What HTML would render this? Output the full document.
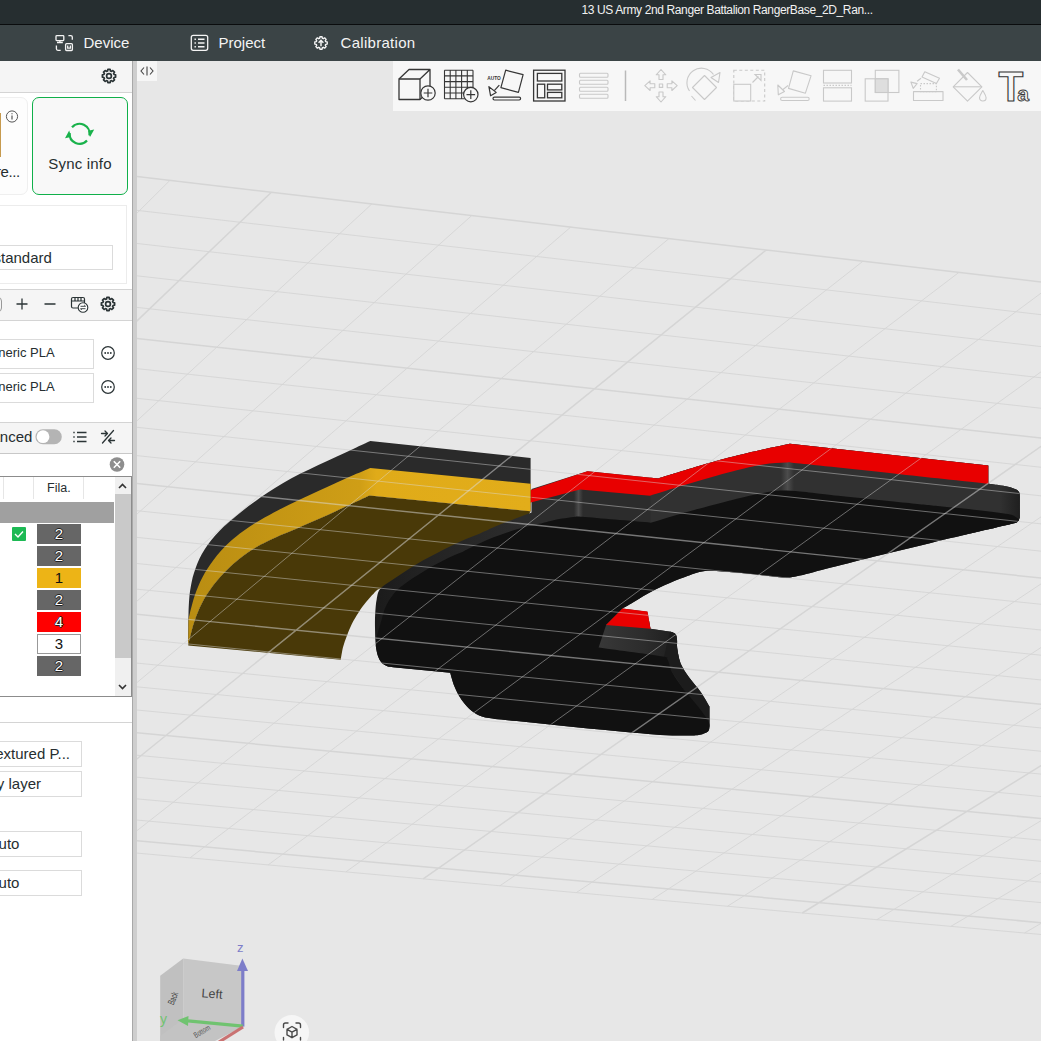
<!DOCTYPE html>
<html><head><meta charset="utf-8"><title>Slicer</title>
<style>
*{box-sizing:border-box}
html,body{margin:0;padding:0}
body{width:1041px;height:1041px;overflow:hidden;position:relative;background:#e7e7e7;font-family:"Liberation Sans",sans-serif;color:#262e30}
.a{position:absolute}
#scene{position:absolute;left:137px;top:61px}
#scene text{font-family:"Liberation Sans",sans-serif}

#title{left:0;top:0;width:1041px;height:25px;background:#262e30;border-bottom:1px solid #0a0c0d;color:#f2f2f2;font-size:12px}
#title span{position:absolute;left:581.5px;top:3px;white-space:nowrap;letter-spacing:-.38px}
#tabs{left:0;top:25px;width:1041px;height:36px;background:#3b4446;color:#f4f4f4;font-size:15px}
#tabs span{position:absolute;top:9px;white-space:nowrap}
#tabs svg{position:absolute}
#panel{left:0;top:61px;width:132px;height:980px;background:#fff;font-size:15px;color:#262e30;overflow:hidden}
#split{left:132px;top:61px;width:5px;height:980px;background:#cecece;border-left:1px solid #a8a8a8}
#collapse{left:137px;top:61px;width:20px;height:20px;background:#f6f6f6}
#toolbar{left:393px;top:61px;width:648px;height:49.700px;background:#f7f7f7}
#toolbar svg{position:absolute;top:0;left:0}
.hdr{left:0;width:132px;background:#f5f5f5}
.ln{left:0;width:132px;height:1px;background:#d4d4d4}
.inp{border:1px solid #dbdbdb;background:#fff;border-left:0;white-space:nowrap;overflow:hidden;line-height:1}
.chip{left:37px;width:44px;height:19.500px;text-align:center;font-size:15px;line-height:19px;color:#fff;background:#666;
 text-shadow:-1px 0 #222,1px 0 #222,0 -1px #222,0 1px #222}

</style></head><body>
<svg id="scene" width="904" height="980" viewBox="137 61 904 980">
<defs>
<clipPath id="mclip"><path d="M188.2 645.4C188.2 642.5 188.2 633.1 188.3 627.9C188.3 622.6 188.4 618 188.5 613.9C188.6 609.8 188.7 606.7 188.9 603.5C189.1 600.3 189.3 597.5 189.6 594.6C190 591.6 190.3 588.8 190.9 585.9C191.4 583 192 580.2 192.7 577.2C193.5 574.3 194.4 571.4 195.5 568.4C196.6 565.4 197.8 562.3 199.3 559.1C200.8 556 202.5 552.8 204.6 549.5C206.6 546.3 208.8 543.1 211.4 539.9C213.9 536.7 216.8 533.5 219.9 530.4C222.9 527.3 226.2 524.3 229.8 521.2C233.3 518.2 237.1 515.1 241.1 512C245.1 508.8 249.4 505.5 253.9 502.3C258.3 499 263 495.6 267.9 492.4C272.8 489.2 277.8 486 283.2 482.9C288.6 479.8 294.3 476.8 300.1 473.8C306 470.9 312.3 467.9 318.4 465C324.6 462.1 330.9 459.1 336.9 456.4C342.8 453.6 348.6 450.9 354.2 448.4C359.8 445.8 367.6 442.2 370.3 441L530.6 458L530.6 511.2L369.5 495.5C366.9 496.7 359.3 500.2 353.9 502.8C348.4 505.3 342.7 508 336.8 510.7C330.9 513.4 324.5 516.3 318.4 519.1C312.3 521.8 305.9 524.5 300.1 527C294.2 529.6 288.5 531.9 283.4 534.1C278.3 536.3 273.7 538.3 269.5 540.3C265.3 542.3 261.7 544.1 258.2 546.1C254.6 548.1 251.4 550.1 248.2 552.3C244.9 554.5 241.7 556.9 238.5 559.5C235.3 562.1 232.1 564.9 229.1 567.8C226.1 570.6 223.1 573.7 220.4 576.7C217.7 579.7 215.2 582.7 212.9 585.7C210.7 588.7 208.7 591.6 206.8 594.5C205 597.4 203.4 600.3 201.9 603.2C200.4 606.1 199.1 609 197.9 611.9C196.7 614.8 195.6 617.6 194.7 620.5C193.7 623.4 192.8 626.2 192.1 629C191.3 631.8 190.6 634.6 190 637.3C189.3 640.1 188.5 644.1 188.2 645.4L188.2 645.4Z"/><path d="M188.2 645.4C188.5 644.1 189.3 640.1 190 637.3C190.6 634.6 191.3 631.8 192.1 629C192.8 626.2 193.7 623.4 194.7 620.5C195.6 617.6 196.7 614.8 197.9 611.9C199.1 609 200.4 606.1 201.9 603.2C203.4 600.3 205 597.4 206.8 594.5C208.7 591.6 210.7 588.7 212.9 585.7C215.2 582.7 217.7 579.7 220.4 576.7C223.1 573.7 226.1 570.6 229.1 567.8C232.1 564.9 235.3 562.1 238.5 559.5C241.7 556.9 244.9 554.5 248.2 552.3C251.4 550.1 254.6 548.1 258.2 546.1C261.7 544.1 265.3 542.3 269.5 540.3C273.7 538.3 278.3 536.3 283.4 534.1C288.5 531.9 294.2 529.6 300.1 527C305.9 524.5 312.3 521.8 318.4 519.1C324.5 516.3 330.9 513.4 336.8 510.7C342.7 508 348.4 505.3 353.9 502.8C359.3 500.2 366.9 496.7 369.5 495.5L530.6 511.2L520 530C513.3 533.3 493.3 543.7 480 550C466.7 556.3 453.3 562.3 440 568C426.7 573.7 409.9 580.6 400 584C390.1 587.4 384.9 587 380.5 588.6C376.1 590.2 376.2 591.1 373.8 593.4C371.4 595.6 368.7 598.9 366.1 602.1C363.5 605.3 360.8 609 358.4 612.7C356 616.4 353.6 620.4 351.7 624.2C349.8 628 348.3 631.9 346.9 635.7C345.4 639.5 344 643.2 343 647.2C342 651.2 341.1 657.6 340.7 659.7L188.2 645.4Z"/><path d="M531.5 489L587.5 471.2L658.4 478.4C666.9 475.8 694.3 467.2 709.2 463C724.1 458.8 734.2 456.2 747.6 453C761 449.8 782.9 445.3 789.9 443.8L988.3 465.5L988.3 483.7C990 483.9 995 484.5 998.3 485C1001.6 485.5 1005.1 486 1008 486.7C1010.9 487.4 1013.9 488.4 1015.7 489.3C1017.6 490.2 1018.4 491 1019.1 492.2C1019.8 493.4 1019.7 495.8 1019.8 496.5L1019.8 517.5C1019.4 518.1 1019 520.4 1017.7 521.4C1016.4 522.4 1018.3 522.1 1011.8 523.8C1005.3 525.5 992.3 528.4 978.8 531.6C965.3 534.8 947.2 539 930.9 542.9C914.6 546.8 897.5 550.8 880.9 554.9C864.2 559 844.5 564 831 567.4C817.5 570.8 807.7 573.8 800 575.5C792.3 577.2 791.7 577.6 785 577.5C778.3 577.4 768.3 575.8 760 575C751.7 574.2 744.2 573.2 735 572.5C725.8 571.8 713.3 570.2 705 571C696.7 571.8 691.7 574.7 685 577C678.3 579.3 671.2 582.2 665 585C658.8 587.8 652.9 590.8 647.5 593.8C642.1 596.8 636.7 600.3 632.5 602.8C628.3 605.3 624.1 607.6 622.4 608.6L647.4 611.8L650.5 628.8L670.6 631.7C671.4 632.1 674.4 632.6 675.5 634C676.6 635.4 676.7 637.5 677 640C677.3 642.5 676.7 645.1 677.3 649C677.9 652.9 678.7 658.6 680.7 663.4C682.7 668.2 686 673 689.4 677.8C692.8 682.6 697.5 687.4 700.9 692.2C704.2 697 708.1 704.2 709.5 706.6L709.5 727C709.2 727.8 709.6 730.2 708 731.5C706.4 732.8 703.1 734.1 700 734.8C696.9 735.5 691.2 735.5 689.4 735.6C684.6 735.5 674.9 735.9 660.5 734.9C646.1 733.9 622.1 731.5 602.9 729.7C583.7 727.9 563.3 725.7 545.3 723.9C527.3 722.1 503.4 719.8 495 719C492.8 718.6 485.9 717.8 482 716.5C478.1 715.2 475.2 713.8 471.8 711C468.4 708.2 464.6 704.1 461.7 700C458.8 695.9 456.4 691 454.5 686.5C452.6 682 450.9 675.1 450.2 672.8L393 667.2C392 667 389.1 667 387.2 666.2C385.3 665.4 383.1 664.5 381.5 662.6C379.9 660.7 378.6 658.4 377.6 655C376.6 651.6 375.9 646.9 375.5 642.4C375.1 637.9 375.1 632.8 375 628C374.9 623.2 374.9 618.4 375.2 613.6C375.5 608.8 375.8 603.4 376.7 599.2C377.6 595 377.6 592 380.5 588.6C383.4 585.2 389.7 581.9 394.4 578.6C399.1 575.3 404 572 408.8 569C413.6 566 418.4 563 423.2 560.3C428 557.6 432.8 555.2 437.6 552.7C442.4 550.2 447.2 547.8 452 545.5C456.8 543.2 461.8 540.7 466.5 538.7C471.2 536.7 474.6 535.7 480 533.4C485.4 531.1 490.2 528.5 498.8 525C507.4 521.5 526 514.5 531.5 512.4L531.5 489Z"/></clipPath>
<linearGradient id="yg" x1="188" y1="0" x2="531" y2="0" gradientUnits="userSpaceOnUse"><stop offset="0" stop-color="#b98d12"/><stop offset=".5" stop-color="#cf9e16"/><stop offset=".55" stop-color="#e0ab19"/><stop offset="1" stop-color="#e2ad1a"/></linearGradient>
<clipPath id="rsil"><path d="M531.5 489L587.5 471.2L658.4 478.4C666.9 475.8 694.3 467.2 709.2 463C724.1 458.8 734.2 456.2 747.6 453C761 449.8 782.9 445.3 789.9 443.8L988.3 465.5L988.3 483.7C990 483.9 995 484.5 998.3 485C1001.6 485.5 1005.1 486 1008 486.7C1010.9 487.4 1013.9 488.4 1015.7 489.3C1017.6 490.2 1018.4 491 1019.1 492.2C1019.8 493.4 1019.7 495.8 1019.8 496.5L1019.8 517.5C1019.4 518.1 1019 520.4 1017.7 521.4C1016.4 522.4 1018.3 522.1 1011.8 523.8C1005.3 525.5 992.3 528.4 978.8 531.6C965.3 534.8 947.2 539 930.9 542.9C914.6 546.8 897.5 550.8 880.9 554.9C864.2 559 844.5 564 831 567.4C817.5 570.8 807.7 573.8 800 575.5C792.3 577.2 791.7 577.6 785 577.5C778.3 577.4 768.3 575.8 760 575C751.7 574.2 744.2 573.2 735 572.5C725.8 571.8 713.3 570.2 705 571C696.7 571.8 691.7 574.7 685 577C678.3 579.3 671.2 582.2 665 585C658.8 587.8 652.9 590.8 647.5 593.8C642.1 596.8 636.7 600.3 632.5 602.8C628.3 605.3 624.1 607.6 622.4 608.6L647.4 611.8L650.5 628.8L670.6 631.7C671.4 632.1 674.4 632.6 675.5 634C676.6 635.4 676.7 637.5 677 640C677.3 642.5 676.7 645.1 677.3 649C677.9 652.9 678.7 658.6 680.7 663.4C682.7 668.2 686 673 689.4 677.8C692.8 682.6 697.5 687.4 700.9 692.2C704.2 697 708.1 704.2 709.5 706.6L709.5 727C709.2 727.8 709.6 730.2 708 731.5C706.4 732.8 703.1 734.1 700 734.8C696.9 735.5 691.2 735.5 689.4 735.6C684.6 735.5 674.9 735.9 660.5 734.9C646.1 733.9 622.1 731.5 602.9 729.7C583.7 727.9 563.3 725.7 545.3 723.9C527.3 722.1 503.4 719.8 495 719C492.8 718.6 485.9 717.8 482 716.5C478.1 715.2 475.2 713.8 471.8 711C468.4 708.2 464.6 704.1 461.7 700C458.8 695.9 456.4 691 454.5 686.5C452.6 682 450.9 675.1 450.2 672.8L393 667.2C392 667 389.1 667 387.2 666.2C385.3 665.4 383.1 664.5 381.5 662.6C379.9 660.7 378.6 658.4 377.6 655C376.6 651.6 375.9 646.9 375.5 642.4C375.1 637.9 375.1 632.8 375 628C374.9 623.2 374.9 618.4 375.2 613.6C375.5 608.8 375.8 603.4 376.7 599.2C377.6 595 377.6 592 380.5 588.6C383.4 585.2 389.7 581.9 394.4 578.6C399.1 575.3 404 572 408.8 569C413.6 566 418.4 563 423.2 560.3C428 557.6 432.8 555.2 437.6 552.7C442.4 550.2 447.2 547.8 452 545.5C456.8 543.2 461.8 540.7 466.5 538.7C471.2 536.7 474.6 535.7 480 533.4C485.4 531.1 490.2 528.5 498.8 525C507.4 521.5 526 514.5 531.5 512.4L531.5 489Z"/></clipPath>
<linearGradient id="wg" x1="375" y1="0" x2="520" y2="0" gradientUnits="userSpaceOnUse"><stop offset="0" stop-color="#1b1b1b"/><stop offset=".35" stop-color="#232323"/><stop offset="1" stop-color="#2c2c2c"/></linearGradient>
<linearGradient id="hl" x1="0" y1="0" x2="1" y2="0"><stop offset="0" stop-color="#4c4c4c" stop-opacity="0"/><stop offset=".5" stop-color="#4c4c4c"/><stop offset="1" stop-color="#4c4c4c" stop-opacity="0"/></linearGradient>
<linearGradient id="cap" x1="0" y1="0" x2="1" y2="0"><stop offset="0" stop-color="#1e1e1e" stop-opacity="0"/><stop offset="1" stop-color="#1e1e1e"/></linearGradient>
<linearGradient id="sw" x1="598" y1="0" x2="676" y2="0" gradientUnits="userSpaceOnUse"><stop offset="0" stop-color="#383838"/><stop offset=".6" stop-color="#2c2c2c"/><stop offset="1" stop-color="#1e1e1e"/></linearGradient>
</defs>
<g fill="none" stroke="#d5d5d5"><path stroke-width=".9" d="M-693.9 114.5L2842.9 522.5M-716 146.2L2791.7 546.2M-737.7 177.2L2741.4 569.5M-758.9 207.5L2692.1 592.4M-800.1 266.4L2595.9 636.9M-820.1 295L2549.1 658.6M-839.6 323L2503.1 680M-858.8 350.4L2457.9 700.9M-896.1 403.8L2369.7 741.8M-914.3 429.7L2326.7 761.7M-932 455.1L2284.4 781.3M-949.5 480.1L2242.8 800.6M-983.4 528.6L2161.6 838.3M-999.9 552.3L2122 856.6M-1016.2 575.5L2082.9 874.7M-1032.1 598.2L2044.6 892.5M-1063.1 642.6L1969.6 927.3M-1078.2 664.2L1932.9 944.3M-1093.1 685.5L1896.8 961M-1107.7 706.4L1861.3 977.5M-1130.5 739L1805.5 1003.3M-671.3 82.2L-1130.5 739M-563.1 94.8L-1044 746.8M-455.8 107.3L-958 754.6M-349.3 119.8L-872.5 762.3M-139.1 144.3L-703.3 777.5M-35.2 156.4L-619.5 785M67.8 168.4L-536.2 792.5M170 180.3L-453.5 800M371.9 203.9L-289.6 814.7M471.7 215.6L-208.4 822M570.7 227.1L-127.7 829.3M668.9 238.6L-47.5 836.5M863 261.2L111.3 850.8M958.9 272.4L190 857.9M1054.1 283.5L268.2 864.9M1148.5 294.5L345.9 871.9M1335.2 316.3L499.9 885.8M1427.5 327.1L576.2 892.7M1519.1 337.8L652.1 899.5M1609.9 348.4L727.4 906.3M1789.7 369.3L876.8 919.7M1878.5 379.7L950.8 926.4M1966.7 390L1024.4 933M2054.2 400.2L1097.5 939.6M2227.3 420.4L1242.5 952.6M2313 430.4L1314.3 959.1M2397.9 440.3L1385.8 965.5M2482.3 450.2L1456.7 971.9M2649.2 469.6L1597.5 984.6M2731.7 479.3L1667.2 990.9M2813.6 488.8L1736.6 997.1M2895 498.3L1805.5 1003.3"/><path stroke-width="1.5" d="M-671.3 82.2L2895 498.3M-779.7 237.3L2643.6 614.8M-877.7 377.4L2413.4 721.5M-966.6 504.6L2201.9 819.6M-1047.7 620.6L2006.8 910M-1122 726.9L1826.3 993.7M-243.8 132.1L-787.6 769.9M271.4 192.2L-371.3 807.4M766.3 249.9L32.1 843.7M1242.2 305.5L423.2 878.9M1700.1 358.9L802.3 913M2141.1 410.3L1170.2 946.1M2566 459.9L1527.3 978.3"/></g>
<path fill="#493908" d="M188.2 645.4C188.5 644.1 189.3 640.1 190 637.3C190.6 634.6 191.3 631.8 192.1 629C192.8 626.2 193.7 623.4 194.7 620.5C195.6 617.6 196.7 614.8 197.9 611.9C199.1 609 200.4 606.1 201.9 603.2C203.4 600.3 205 597.4 206.8 594.5C208.7 591.6 210.7 588.7 212.9 585.7C215.2 582.7 217.7 579.7 220.4 576.7C223.1 573.7 226.1 570.6 229.1 567.8C232.1 564.9 235.3 562.1 238.5 559.5C241.7 556.9 244.9 554.5 248.2 552.3C251.4 550.1 254.6 548.1 258.2 546.1C261.7 544.1 265.3 542.3 269.5 540.3C273.7 538.3 278.3 536.3 283.4 534.1C288.5 531.9 294.2 529.6 300.1 527C305.9 524.5 312.3 521.8 318.4 519.1C324.5 516.3 330.9 513.4 336.8 510.7C342.7 508 348.4 505.3 353.9 502.8C359.3 500.2 366.9 496.7 369.5 495.5L530.6 511.2L520 530C513.3 533.3 493.3 543.7 480 550C466.7 556.3 453.3 562.3 440 568C426.7 573.7 409.9 580.6 400 584C390.1 587.4 384.9 587 380.5 588.6C376.1 590.2 376.2 591.1 373.8 593.4C371.4 595.6 368.7 598.9 366.1 602.1C363.5 605.3 360.8 609 358.4 612.7C356 616.4 353.6 620.4 351.7 624.2C349.8 628 348.3 631.9 346.9 635.7C345.4 639.5 344 643.2 343 647.2C342 651.2 341.1 657.6 340.7 659.7L188.2 645.4Z"/>
<path fill="url(#wg)" d="M531.5 489L587.5 471.2L658.4 478.4C666.9 475.8 694.3 467.2 709.2 463C724.1 458.8 734.2 456.2 747.6 453C761 449.8 782.9 445.3 789.9 443.8L988.3 465.5L988.3 483.7C990 483.9 995 484.5 998.3 485C1001.6 485.5 1005.1 486 1008 486.7C1010.9 487.4 1013.9 488.4 1015.7 489.3C1017.6 490.2 1018.4 491 1019.1 492.2C1019.8 493.4 1019.7 495.8 1019.8 496.5L1019.8 517.5C1019.4 518.1 1019 520.4 1017.7 521.4C1016.4 522.4 1018.3 522.1 1011.8 523.8C1005.3 525.5 992.3 528.4 978.8 531.6C965.3 534.8 947.2 539 930.9 542.9C914.6 546.8 897.5 550.8 880.9 554.9C864.2 559 844.5 564 831 567.4C817.5 570.8 807.7 573.8 800 575.5C792.3 577.2 791.7 577.6 785 577.5C778.3 577.4 768.3 575.8 760 575C751.7 574.2 744.2 573.2 735 572.5C725.8 571.8 713.3 570.2 705 571C696.7 571.8 691.7 574.7 685 577C678.3 579.3 671.2 582.2 665 585C658.8 587.8 652.9 590.8 647.5 593.8C642.1 596.8 636.7 600.3 632.5 602.8C628.3 605.3 624.1 607.6 622.4 608.6L647.4 611.8L650.5 628.8L670.6 631.7C671.4 632.1 674.4 632.6 675.5 634C676.6 635.4 676.7 637.5 677 640C677.3 642.5 676.7 645.1 677.3 649C677.9 652.9 678.7 658.6 680.7 663.4C682.7 668.2 686 673 689.4 677.8C692.8 682.6 697.5 687.4 700.9 692.2C704.2 697 708.1 704.2 709.5 706.6L709.5 727C709.2 727.8 709.6 730.2 708 731.5C706.4 732.8 703.1 734.1 700 734.8C696.9 735.5 691.2 735.5 689.4 735.6C684.6 735.5 674.9 735.9 660.5 734.9C646.1 733.9 622.1 731.5 602.9 729.7C583.7 727.9 563.3 725.7 545.3 723.9C527.3 722.1 503.4 719.8 495 719C492.8 718.6 485.9 717.8 482 716.5C478.1 715.2 475.2 713.8 471.8 711C468.4 708.2 464.6 704.1 461.7 700C458.8 695.9 456.4 691 454.5 686.5C452.6 682 450.9 675.1 450.2 672.8L393 667.2C392 667 389.1 667 387.2 666.2C385.3 665.4 383.1 664.5 381.5 662.6C379.9 660.7 378.6 658.4 377.6 655C376.6 651.6 375.9 646.9 375.5 642.4C375.1 637.9 375.1 632.8 375 628C374.9 623.2 374.9 618.4 375.2 613.6C375.5 608.8 375.8 603.4 376.7 599.2C377.6 595 377.6 592 380.5 588.6C383.4 585.2 389.7 581.9 394.4 578.6C399.1 575.3 404 572 408.8 569C413.6 566 418.4 563 423.2 560.3C428 557.6 432.8 555.2 437.6 552.7C442.4 550.2 447.2 547.8 452 545.5C456.8 543.2 461.8 540.7 466.5 538.7C471.2 536.7 474.6 535.7 480 533.4C485.4 531.1 490.2 528.5 498.8 525C507.4 521.5 526 514.5 531.5 512.4L531.5 489Z"/>
<g clip-path="url(#rsil)"><rect x="650.5" y="440" width="372" height="95" fill="#313131"/><rect x="574" y="472" width="9" height="50" fill="url(#hl)"/><rect x="781" y="442" width="13" height="52" fill="url(#hl)"/><rect x="1000" y="480" width="21" height="45" fill="url(#cap)"/><rect x="596" y="620" width="84" height="42" fill="url(#sw)"/><path d="M670 631L678 630L712 706L712 730L706 722L684 690L672 672L664 657Z" fill="#1c1c1c"/></g>
<path fill="#111" d="M375.8 646C376.1 644.1 376.4 638.6 377.3 634.6C378.2 630.6 379.6 626.6 381 621.9C382.4 617.2 383.6 611.3 385.8 606.5C388 601.7 391.4 596.7 394.4 593C397.4 589.3 400 587.4 404 584.4C408 581.4 413.6 577.8 418.4 574.8C423.2 571.8 428 568.8 432.8 566.1C437.6 563.4 442.4 560.7 447.2 558.4C452 556.1 457.9 553.9 461.7 552.2C465.5 550.5 464.8 550.4 470 548C475.2 545.6 485.3 540.7 493 537.6C500.7 534.5 508.4 531.9 516.1 529.6C523.8 527.3 533.4 525.2 539.2 523.8C545 522.3 546.9 521.8 550.7 520.9C554.5 520 558.4 519.3 562.2 518.6C566 517.9 570.4 517.2 573.7 516.9C577 516.6 575.1 516.2 582 516.7C588.9 517.2 603.5 518.6 615 519.6C626.5 520.6 644.8 522.2 650.8 522.7C656.7 521 672.5 516 686.1 512.2C699.7 508.4 719.4 503.1 732.2 499.9C745 496.7 755.3 494.5 763 493C770.7 491.5 772.1 490.9 778.3 490.7C784.5 490.4 791.2 490.8 800 491.5C808.8 492.2 813.4 493.1 831 495C848.6 496.9 887.7 500.9 905.9 502.8C924.1 504.7 927.9 505.1 940 506.3C952.1 507.5 967.5 508.9 978.8 510.2C990.1 511.5 1001.9 513 1008 514.1C1014.1 515.2 1013.8 516 1015.7 517C1017.6 518 1018.7 519.3 1019.3 519.8C1019 520.1 1019 520.7 1017.7 521.4C1016.5 522.1 1018.3 522.1 1011.8 523.8C1005.3 525.5 992.3 528.4 978.8 531.6C965.3 534.8 947.2 539 930.9 542.9C914.6 546.8 897.5 550.8 880.9 554.9C864.2 559 844.5 564 831 567.4C817.5 570.8 807.7 573.8 800 575.5C792.3 577.2 791.7 577.6 785 577.5C778.3 577.4 768.3 575.8 760 575C751.7 574.2 744.2 573.2 735 572.5C725.8 571.8 713.3 570.2 705 571C696.7 571.8 691.7 574.7 685 577C678.3 579.3 671.2 582.2 665 585C658.8 587.8 652.9 590.8 647.5 593.8C642.1 596.8 636.7 600.3 632.5 602.8C628.3 605.3 624.1 607.6 622.4 608.6L606.2 624.8L598.6 647.5C608.9 649 649 654.2 660.5 656.2C672 658.2 665.5 656.9 667.4 659.5C669.3 662.1 669.3 667 672 672C674.7 677 679.3 683.5 683.6 689.3C687.9 695.1 693.9 701.3 698 706.6C702.1 711.9 706.2 717.6 708.1 721C710 724.4 709.3 726 709.5 727C709.2 727.8 709.6 730.2 708 731.5C706.4 732.8 703.1 734.1 700 734.8C696.9 735.5 691.2 735.5 689.4 735.6C684.6 735.5 674.9 735.9 660.5 734.9C646.1 733.9 622.1 731.5 602.9 729.7C583.7 727.9 563.3 725.7 545.3 723.9C527.3 722.1 503.4 719.8 495 719C492.8 718.6 485.9 717.8 482 716.5C478.1 715.2 475.2 713.8 471.8 711C468.4 708.2 464.6 704.1 461.7 700C458.8 695.9 456.4 691 454.5 686.5C452.6 682 450.9 675.1 450.2 672.8L393 667.2C392 667 389.1 667 387.2 666.2C385.3 665.4 383.1 664.5 381.5 662.6C379.9 660.7 378.6 657.8 377.6 655C376.7 652.2 376.1 647.5 375.8 646Z"/>
<path fill="#e80000" d="M525 492L587.5 471.2L658.4 478.4C666.9 475.8 694.3 467.2 709.2 463C724.1 458.8 734.2 456.2 747.6 453C761 449.8 782.9 445.3 789.9 443.8L988.3 465.5L988.3 483.7C973.6 482.1 931.4 477.6 900 474.2C868.6 470.8 819 465.4 800 463.5C781 461.6 792.2 462.4 786 462.6C779.8 462.8 772 463.1 763 464.6C754 466.1 745 468.2 732.2 471.5C719.4 474.8 699.8 480.6 686.1 484.6C672.4 488.7 656 493.9 650 495.8L580 489.5L525 504L525 492Z"/>
<path fill="#e80000" d="M622.4 608.6L647.5 611.6L650.5 628.8L606 625L622.4 608.6Z"/>
<path fill="#2a2a2a" d="M188.2 645.4C188.2 642.5 188.2 633.1 188.3 627.9C188.3 622.6 188.4 618 188.5 613.9C188.6 609.8 188.7 606.7 188.9 603.5C189.1 600.3 189.3 597.5 189.6 594.6C190 591.6 190.3 588.8 190.9 585.9C191.4 583 192 580.2 192.7 577.2C193.5 574.3 194.4 571.4 195.5 568.4C196.6 565.4 197.8 562.3 199.3 559.1C200.8 556 202.5 552.8 204.6 549.5C206.6 546.3 208.8 543.1 211.4 539.9C213.9 536.7 216.8 533.5 219.9 530.4C222.9 527.3 226.2 524.3 229.8 521.2C233.3 518.2 237.1 515.1 241.1 512C245.1 508.8 249.4 505.5 253.9 502.3C258.3 499 263 495.6 267.9 492.4C272.8 489.2 277.8 486 283.2 482.9C288.6 479.8 294.3 476.8 300.1 473.8C306 470.9 312.3 467.9 318.4 465C324.6 462.1 330.9 459.1 336.9 456.4C342.8 453.6 348.6 450.9 354.2 448.4C359.8 445.8 367.6 442.2 370.3 441L530.6 458L530.6 511.2L369.5 495.5C366.9 496.7 359.3 500.2 353.9 502.8C348.4 505.3 342.7 508 336.8 510.7C330.9 513.4 324.5 516.3 318.4 519.1C312.3 521.8 305.9 524.5 300.1 527C294.2 529.6 288.5 531.9 283.4 534.1C278.3 536.3 273.7 538.3 269.5 540.3C265.3 542.3 261.7 544.1 258.2 546.1C254.6 548.1 251.4 550.1 248.2 552.3C244.9 554.5 241.7 556.9 238.5 559.5C235.3 562.1 232.1 564.9 229.1 567.8C226.1 570.6 223.1 573.7 220.4 576.7C217.7 579.7 215.2 582.7 212.9 585.7C210.7 588.7 208.7 591.6 206.8 594.5C205 597.4 203.4 600.3 201.9 603.2C200.4 606.1 199.1 609 197.9 611.9C196.7 614.8 195.6 617.6 194.7 620.5C193.7 623.4 192.8 626.2 192.1 629C191.3 631.8 190.6 634.6 190 637.3C189.3 640.1 188.5 644.1 188.2 645.4L188.2 645.4Z"/>
<path fill="url(#yg)" d="M188.5 619C188.8 617.7 189.7 613.8 190.3 611.2C191 608.5 191.7 605.8 192.5 603C193.2 600.3 194.1 597.4 195.1 594.6C196.1 591.7 197.1 588.8 198.4 585.9C199.6 583 200.9 580.2 202.5 577.3C204 574.4 205.7 571.5 207.6 568.6C209.4 565.7 211.4 562.8 213.7 559.8C215.9 556.9 218.2 553.9 221 550.8C223.8 547.6 226.8 544.5 230.5 541.2C234.3 537.9 238.5 534.4 243.4 530.9C248.3 527.4 254.1 523.7 260 520.2C266 516.7 272.7 513.1 279.1 509.7C285.6 506.4 292.4 503.1 298.9 500C305.4 496.8 311.9 493.8 318.3 490.9C324.6 488 330.9 485.1 336.9 482.4C342.9 479.7 348.6 477.1 354.2 474.7C359.8 472.3 367.6 469 370.3 467.9L530.6 483.7L530.6 511.2L369.5 495.5C366.9 496.7 359.3 500.2 353.9 502.8C348.4 505.3 342.7 508 336.8 510.7C330.9 513.4 324.5 516.3 318.4 519.1C312.3 521.8 305.9 524.5 300.1 527C294.2 529.6 288.5 531.9 283.4 534.1C278.3 536.3 273.7 538.3 269.5 540.3C265.3 542.3 261.7 544.1 258.2 546.1C254.6 548.1 251.4 550.1 248.2 552.3C244.9 554.5 241.7 556.9 238.5 559.5C235.3 562.1 232.1 564.9 229.1 567.8C226.1 570.6 223.1 573.7 220.4 576.7C217.7 579.7 215.2 582.7 212.9 585.7C210.7 588.7 208.7 591.6 206.8 594.5C205 597.4 203.4 600.3 201.9 603.2C200.4 606.1 199.1 609 197.9 611.9C196.7 614.8 195.6 617.6 194.7 620.5C193.7 623.4 192.8 626.2 192.1 629C191.3 631.8 190.6 634.6 190 637.3C189.3 640.1 188.5 644.1 188.2 645.4L188.5 619Z"/>
<g clip-path="url(#mclip)" fill="none" stroke="#dcdcdc" stroke-opacity=".5"><path stroke-width=".9" d="M-693.9 114.5L2842.9 522.5M-716 146.2L2791.7 546.2M-737.7 177.2L2741.4 569.5M-758.9 207.5L2692.1 592.4M-800.1 266.4L2595.9 636.9M-820.1 295L2549.1 658.6M-839.6 323L2503.1 680M-858.8 350.4L2457.9 700.9M-896.1 403.8L2369.7 741.8M-914.3 429.7L2326.7 761.7M-932 455.1L2284.4 781.3M-949.5 480.1L2242.8 800.6M-983.4 528.6L2161.6 838.3M-999.9 552.3L2122 856.6M-1016.2 575.5L2082.9 874.7M-1032.1 598.2L2044.6 892.5M-1063.1 642.6L1969.6 927.3M-1078.2 664.2L1932.9 944.3M-1093.1 685.5L1896.8 961M-1107.7 706.4L1861.3 977.5M-1130.5 739L1805.5 1003.3M-671.3 82.2L-1130.5 739M-563.1 94.8L-1044 746.8M-455.8 107.3L-958 754.6M-349.3 119.8L-872.5 762.3M-139.1 144.3L-703.3 777.5M-35.2 156.4L-619.5 785M67.8 168.4L-536.2 792.5M170 180.3L-453.5 800M371.9 203.9L-289.6 814.7M471.7 215.6L-208.4 822M570.7 227.1L-127.7 829.3M668.9 238.6L-47.5 836.5M863 261.2L111.3 850.8M958.9 272.4L190 857.9M1054.1 283.5L268.2 864.9M1148.5 294.5L345.9 871.9M1335.2 316.3L499.9 885.8M1427.5 327.1L576.2 892.7M1519.1 337.8L652.1 899.5M1609.9 348.4L727.4 906.3M1789.7 369.3L876.8 919.7M1878.5 379.7L950.8 926.4M1966.7 390L1024.4 933M2054.2 400.2L1097.5 939.6M2227.3 420.4L1242.5 952.6M2313 430.4L1314.3 959.1M2397.9 440.3L1385.8 965.5M2482.3 450.2L1456.7 971.9M2649.2 469.6L1597.5 984.6M2731.7 479.3L1667.2 990.9M2813.6 488.8L1736.6 997.1M2895 498.3L1805.5 1003.3"/><path stroke-width="1.4" d="M-671.3 82.2L2895 498.3M-779.7 237.3L2643.6 614.8M-877.7 377.4L2413.4 721.5M-966.6 504.6L2201.9 819.6M-1047.7 620.6L2006.8 910M-1122 726.9L1826.3 993.7M-243.8 132.1L-787.6 769.9M271.4 192.2L-371.3 807.4M766.3 249.9L32.1 843.7M1242.2 305.5L423.2 878.9M1700.1 358.9L802.3 913M2141.1 410.3L1170.2 946.1M2566 459.9L1527.3 978.3"/></g>
<g id="navcube">
<polygon fill="#c0c0c0" points="160.2,975.7 183.2,958.4 183.2,1041 160.2,1041"/>
<polygon fill="#c7c7c7" points="183.2,958.4 242.8,966.1 242.8,1026.6 183.2,1019"/>
<polygon fill="#c3c3c3" points="183.2,1019 242.8,1026.6 215,1041 160.2,1041 160.2,1036"/>
<text x="212" y="998" font-size="12.5" fill="#444" text-anchor="middle" transform="rotate(4 212 994)">Left</text>
<text x="0" y="3" font-size="9.500" fill="#444" text-anchor="middle" transform="translate(173.200 998.400) rotate(-68) scale(.62 1)">Back</text>
<text x="0" y="2.500" font-size="8" fill="#555" text-anchor="middle" transform="translate(202 1031.500) rotate(-32) scale(.7 1)">Bottom</text>
<path d="M242.8 1026.6V971" stroke="#7d7dc9" stroke-width="3.2" fill="none"/>
<polygon fill="#7d7dc9" points="237,971 248,971 242.4,958.5"/>
<path d="M242.8 1026.2L188 1020.8" stroke="#70c370" stroke-width="3.2" fill="none"/>
<polygon fill="#70c370" points="177.5,1020.3 188.5,1016 188,1026"/>
<path d="M243 1027L219 1042" stroke="#c97272" stroke-width="3.2" fill="none"/>
<text x="237" y="951.5" font-size="13" fill="#7d7dc9">z</text>
<text x="160" y="1024" font-size="14" fill="#70c370">y</text>
<circle cx="291.8" cy="1032.4" r="17.3" fill="#f6f6f6"/>
<g fill="none" stroke="#4a4a4a" stroke-width="1.4" stroke-linecap="round" stroke-linejoin="round">
<path d="M283.5 1027.5v-2.5a2 2 0 0 1 2-2h2.5M296 1023h2.500a2 2 0 0 1 2 2v2.500M283.500 1037.500v2.500M300.500 1037.500v2.500"/>
<path d="M292 1026.500l5 2.800v5.600l-5 2.800l-5-2.800v-5.600zM287 1029.300l5 2.800l5-2.800M292 1032.100v5.600"/>
</g>
</g>
</svg>

<div class="a" id="title"><span>13 US Army 2nd Ranger Battalion RangerBase_2D_Ran...</span></div>
<div class="a" id="tabs">
<svg width="450" height="36" viewBox="0 25 450 36" style="left:0;top:0" fill="none" stroke="#f4f4f4" stroke-width="1.300">
 <rect x="56" y="35.600" width="7.800" height="5" rx=".8"/><path d="M59.900 40.600v1.900M57 42.500h5.800M68.400 35.600h2.400a1.500 1.500 0 0 1 1.500 1.500v2.600M56.400 45.400v3.400a1.500 1.500 0 0 0 1.500 1.500h2.800"/><rect x="65.600" y="43.700" width="6.800" height="6.800" rx="1"/><path d="M67.700 45.600v2.600h2.700v-2.600"/>
 <rect x="191.300" y="35.300" width="16.400" height="15" rx="2"/><path d="M198 39.300h6.500M198 43h6.500M198 46.700h6.500" stroke-width="1.600"/><path d="M194.500 39.300h1.400M194.500 43h1.400M194.500 46.700h1.400" stroke-width="1.500"/>
 <path d="M327.21 41.92L327.21 44.08L325.72 44.37L325.31 45.37L326.15 46.62L324.62 48.15L323.37 47.31L322.37 47.72L322.08 49.21L319.92 49.21L319.63 47.72L318.63 47.31L317.38 48.15L315.85 46.62L316.69 45.37L316.28 44.37L314.79 44.08L314.79 41.92L316.28 41.63L316.69 40.63L315.85 39.38L317.38 37.85L318.63 38.69L319.63 38.28L319.92 36.79L322.08 36.79L322.37 38.28L323.37 38.69L324.62 37.85L326.15 39.38L325.31 40.63L325.72 41.63Z" fill="none" stroke="#f4f4f4" stroke-width="1.4" stroke-linejoin="round"/><path d="M321 46.300v-5.600M318.600 42.800l2.400-2.500l2.400 2.500" stroke-width="1.500"/>
</svg>
<span style="left:83.500px">Device</span><span style="left:218.500px">Project</span><span style="left:340.500px;letter-spacing:.3px">Calibration</span>
</div>
<div class="a" id="panel">
 <div class="a hdr" style="top:0;height:31px"></div><div class="a ln" style="top:31px"></div>
 <div class="a" style="left:-10px;top:36px;width:38px;height:98px;border:1px solid #efefef;border-radius:7px;background:#fdfdfd"></div>
 <div class="a" style="left:0;top:52px;width:1px;height:44px;background:#c69a4e"></div>
 <div class="a" style="left:-4px;top:102px;font-size:15px;letter-spacing:-.4px">re...</div>
 <div class="a" style="left:32px;top:36px;width:96px;height:98px;border:1px solid #10b04a;border-radius:7px;background:#f8f8f8"></div>
 <div class="a" style="left:32px;top:94px;width:96px;text-align:center;font-size:15px;letter-spacing:.2px">Sync info</div>
 <div class="a" style="left:-5px;top:144px;width:132px;height:79px;border:1px solid #ececec"></div>
 <div class="a inp" style="left:0;top:184px;width:113px;height:25px;padding:4px 0 0 0;font-size:15px"><span style="margin-left:-6.500px">standard</span></div>
 <div class="a ln" style="top:228px"></div><div class="a hdr" style="top:229px;height:30px"></div><div class="a ln" style="top:259px"></div>
 <div class="a" style="left:-6px;top:236px;width:8px;height:15px;border:1px solid #999;border-radius:4px"></div>
 <div class="a inp" style="left:0;top:278.300px;width:94px;height:29.700px;padding:6.200px 0 0 0;font-size:13px"><span style="margin-left:-9px">eneric PLA</span></div>
 <div class="a inp" style="left:0;top:312.300px;width:94px;height:29.700px;padding:6.200px 0 0 0;font-size:13px"><span style="margin-left:-9px">eneric PLA</span></div>
 <div class="a ln" style="top:361px"></div><div class="a hdr" style="top:362px;height:30px"></div><div class="a ln" style="top:392px;background:#c8c8c8"></div>
 <div class="a" style="left:-16px;top:366.500px;font-size:15px">vanced</div>
 <div class="a" style="left:0;top:414.500px;width:132px;height:1px;background:#8c8c8c"></div>
 <div class="a" style="left:0;top:416px;width:132px;height:220px;border-right:1px solid #8c8c8c;border-bottom:1px solid #8c8c8c"></div>
 <div class="a" style="left:3px;top:416px;width:1px;height:22px;background:#e6e6e6"></div>
 <div class="a" style="left:33px;top:416px;width:1px;height:22px;background:#e6e6e6"></div>
 <div class="a" style="left:83px;top:416px;width:1px;height:22px;background:#e6e6e6"></div>
 <div class="a" style="left:47px;top:420px;font-size:12.500px">Fila.</div>
 <div class="a" style="left:115px;top:416px;width:16px;height:219px;background:#f0f0f0"></div>
 <div class="a" style="left:115px;top:433px;width:16px;height:164px;background:#c9c9c9"></div>
 <div class="a" style="left:0;top:440.500px;width:114px;height:21.500px;background:#a0a0a0"></div>
 <div class="a chip" style="top:463.2px;">2</div><div class="a chip" style="top:485.2px;">2</div><div class="a chip" style="top:507.2px;background:#edb416;color:#111;text-shadow:none">1</div><div class="a chip" style="top:529.2px;">2</div><div class="a chip" style="top:551.2px;background:#ff0000">4</div><div class="a chip" style="top:573.2px;background:#fff;color:#111;text-shadow:none;border:1px solid #999;line-height:17px">3</div><div class="a chip" style="top:595.2px;">2</div>
 <div class="a ln" style="top:661px"></div>
 <div class="a inp" style="left:0;top:680px;width:82px;height:26px;padding:4px 0 0 0;font-size:15px"><span style="margin-left:-12.300px">Textured P...</span></div>
 <div class="a inp" style="left:0;top:710px;width:82px;height:26px;padding:4px 0 0 0;font-size:15px"><span style="margin-left:-3.200px">y layer</span></div>
 <div class="a inp" style="left:0;top:770px;width:82px;height:26px;padding:4px 0 0 0;font-size:15px"><span style="margin-left:-11.400px">Auto</span></div>
 <div class="a inp" style="left:0;top:809px;width:82px;height:26px;padding:4px 0 0 0;font-size:15px"><span style="margin-left:-11.400px">Auto</span></div>
 <svg class="a" style="left:0;top:0" width="132" height="980" viewBox="0 61 132 980"><path d="M115.60 74.85L115.60 77.15L114.02 77.46L113.58 78.52L114.48 79.85L112.85 81.48L111.52 80.58L110.46 81.02L110.15 82.60L107.85 82.60L107.54 81.02L106.48 80.58L105.15 81.48L103.52 79.85L104.42 78.52L103.98 77.46L102.40 77.15L102.40 74.85L103.98 74.54L104.42 73.48L103.52 72.15L105.15 70.52L106.48 71.42L107.54 70.98L107.85 69.40L110.15 69.40L110.46 70.98L111.52 71.42L112.85 70.52L114.48 72.15L113.58 73.48L114.02 74.54Z" fill="none" stroke="#2b3436" stroke-width="1.7" stroke-linejoin="round"/><circle cx="109" cy="76" r="2.41" fill="none" stroke="#2b3436" stroke-width="1.7"/><circle cx="12" cy="116.500" r="5.600" fill="none" stroke="#555" stroke-width="1"/><path d="M12 115.500v4M12 113.300v.9" stroke="#555" stroke-width="1.200" fill="none"/><g fill="none" stroke="#19b24b" stroke-width="2.200"><path d="M72 127.300a10 10 0 0 1 17.450 8.200"/><path d="M87 140.500a10 10 0 0 1-17.350-7.700"/></g><path d="M94.200 129.400l-4.200 7.700l-1.900-6.400z" fill="#19b24b"/><path d="M65 138.200l4.200-7.700l1.900 6.400z" fill="#19b24b"/><path d="M16.500 304h11M22 298.500v11M44.500 304h11" stroke="#2b3436" stroke-width="1.300" fill="none"/><g fill="none" stroke="#2b3436" stroke-width="1.200"><rect x="71.500" y="297.500" width="13" height="10.500" rx="1.500"/><path d="M71.500 301h13M75 297.500v3.500M78 297.500v3.500M81 297.500v3.500"/></g><circle cx="83" cy="307.500" r="4.800" fill="#fff" stroke="#2b3436" stroke-width="1.100"/><path d="M80.500 306.300h5l-1.300-1.300M85.500 308.700h-5l1.300 1.300" fill="none" stroke="#2b3436" stroke-width=".9"/><path d="M114.60 302.85L114.60 305.15L113.02 305.46L112.58 306.52L113.48 307.85L111.85 309.48L110.52 308.58L109.46 309.02L109.15 310.60L106.85 310.60L106.54 309.02L105.48 308.58L104.15 309.48L102.52 307.85L103.42 306.52L102.98 305.46L101.40 305.15L101.40 302.85L102.98 302.54L103.42 301.48L102.52 300.15L104.15 298.52L105.48 299.42L106.54 298.98L106.85 297.40L109.15 297.40L109.46 298.98L110.52 299.42L111.85 298.52L113.48 300.15L112.58 301.48L113.02 302.54Z" fill="none" stroke="#2b3436" stroke-width="1.7" stroke-linejoin="round"/><circle cx="108" cy="304" r="2.41" fill="none" stroke="#2b3436" stroke-width="1.7"/><circle cx="108" cy="353" r="6.3" fill="none" stroke="#2b3436" stroke-width="1.2"/><circle cx="105.2" cy="353" r=".9" fill="#2b3436"/><circle cx="108" cy="353" r=".9" fill="#2b3436"/><circle cx="110.8" cy="353" r=".9" fill="#2b3436"/><circle cx="108" cy="387" r="6.3" fill="none" stroke="#2b3436" stroke-width="1.2"/><circle cx="105.2" cy="387" r=".9" fill="#2b3436"/><circle cx="108" cy="387" r=".9" fill="#2b3436"/><circle cx="110.8" cy="387" r=".9" fill="#2b3436"/><rect x="35.400" y="429.200" width="26.400" height="15" rx="7.500" fill="#b4b4b4"/><circle cx="43" cy="436.700" r="6.400" fill="#fff"/><path d="M77 432.500h9.500M77 437h9.500M77 441.500h9.500" stroke="#2b3436" stroke-width="1.400" fill="none"/><path d="M73.300 432.500h1.400M73.300 437h1.400M73.300 441.500h1.400" stroke="#2b3436" stroke-width="1.600" fill="none"/><g fill="none" stroke="#2b3436" stroke-width="1.300" stroke-linecap="round" stroke-linejoin="round"><path d="M102.500 443l11-12.500M101.500 433.500h6l-2.500-2.500M107.500 433.500l-2.500 2.500M114.500 440.500h-6l2.500-2.500M108.500 440.500l2.500 2.500"/></g><circle cx="117" cy="464.500" r="7.300" fill="#8e8e8e"/><path d="M113.800 461.300l6.400 6.400M120.200 461.300l-6.400 6.400" stroke="#fff" stroke-width="1.600" fill="none"/><path d="M119 488l3.500-3.500l3.500 3.500" fill="none" stroke="#333" stroke-width="1.600"/><path d="M119 685l3.500 3.500l3.500-3.500" fill="none" stroke="#333" stroke-width="1.600"/><rect x="12" y="527" width="14" height="14" rx="1" fill="#1db954"/><path d="M15 534l3 3l5-5.500" fill="none" stroke="#fff" stroke-width="1.400"/></svg>
</div>
<div class="a" id="split"></div>
<div class="a" id="collapse"><svg width="20" height="20" viewBox="0 0 20 20" fill="none" stroke="#444" stroke-width="1.100"><path d="M7 6.500l-3 3.500l3 3.500M10 5.500v9M13 6.500l3 3.500l-3 3.500"/></svg></div>
<div class="a" id="toolbar"><svg width="648" height="50" viewBox="393 61 648 50" font-family="Liberation Sans, sans-serif"><g fill="none" stroke="#363636" stroke-width="1.3" stroke-linejoin="round"><rect x="399" y="79" width="21" height="20.500"/><path d="M399 79l10-9.500h21l-10 9.500M430 69.500v20.500l-10 9.500"/></g><circle cx="428" cy="93" r="7.2" fill="#f7f7f7" stroke="#363636" stroke-width="1.2"/><path d="M423.7 93h8.6M428 88.7v8.6" stroke="#363636" stroke-width="1.2" fill="none"/><path d="M444.5 70.200v28.500M450.2 70.200v28.500M455.9 70.200v28.500M461.6 70.200v28.500M467.3 70.200v28.500M473.0 70.200v28.500M444.500 70.2h28.500M444.500 75.9h28.500M444.500 81.60000000000001h28.500M444.500 87.30000000000001h28.500M444.500 93.0h28.500M444.500 98.7h28.500" fill="none" stroke="#363636" stroke-width="1.100"/><circle cx="470.8" cy="94.6" r="7.2" fill="#f7f7f7" stroke="#363636" stroke-width="1.2"/><path d="M466.5 94.6h8.6M470.8 90.3v8.6" stroke="#363636" stroke-width="1.2" fill="none"/><g fill="none" stroke="#363636" stroke-width="1.200" stroke-linejoin="round"><polygon points="505.700,70.200 523.100,74.700 518.400,92.400 500.900,87.600"/><rect x="493" y="97.200" width="27.600" height="2.800" rx="1.400"/><path d="M499.300 85.100l-5 5.600"/><polygon points="488.900,86.700 496.200,92.400 490.600,95.800"/></g><text x="487.300" y="79.800" font-size="5.300" font-weight="bold" fill="#363636" textLength="13.500" lengthAdjust="spacingAndGlyphs">AUTO</text><g fill="none" stroke="#363636" stroke-width="1.300"><rect x="533.600" y="70.200" width="31.400" height="30.800"/><rect x="537.400" y="73.400" width="24.400" height="7.600"/><rect x="537.400" y="84.200" width="7.300" height="13.600"/><rect x="547.500" y="84.200" width="14.300" height="5.700"/><rect x="547.500" y="92.400" width="14.300" height="5.400"/></g><g fill="none" stroke="#c9c9c9" stroke-width="1.100"><rect x="579.500" y="73.3" width="28.500" height="3.900" rx="1"/><rect x="579.500" y="80.3" width="28.500" height="3.900" rx="1"/><rect x="579.500" y="87.3" width="28.500" height="3.900" rx="1"/><rect x="579.500" y="94.3" width="28.500" height="3.900" rx="1"/></g><path d="M625.500 70.500v30.500" stroke="#b9b9b9" stroke-width="1.500"/><g fill="none" stroke="#c9c9c9" stroke-width="1.100" stroke-linejoin="round"><rect x="659.300" y="84" width="3.400" height="3.400"/><path d="M661 69.500l4.800 5.300h-2.800v4.700h-4v-4.700h-2.800z"/><path d="M661 102l4.800-5.300h-2.800v-4.700h-4v4.700h-2.800z"/><path d="M644.800 85.700l5.300-4.800v2.800h4.700v4h-4.700v2.800z"/><path d="M677.200 85.700l-5.300-4.800v2.800h-4.700v4h4.700v2.800z"/></g><g fill="none" stroke="#c9c9c9" stroke-width="1.100" stroke-linejoin="round"><polygon points="704.500,75.500 716.500,87.500 704.500,99.500 692.500,87.500"/><path d="M689.500 91a14.500 14.500 0 0 1 24-16.500"/><path d="M695.500 100.500l-4-4.500"/><polygon points="711,77.500 720,72.500 718.500,82.500"/></g><g fill="none" stroke="#c9c9c9" stroke-width="1.100"><rect x="733.800" y="70.300" width="30.900" height="30.700" stroke-dasharray="3 2.500"/><rect x="733.800" y="84.300" width="16.900" height="16.700" fill="#f7f7f7"/><path d="M752.500 82.500l6-6M755 74.500h6v6z"/></g><g fill="none" stroke="#c9c9c9" stroke-width="1.100" stroke-linejoin="round"><polygon points="793.300,70.900 811.100,75.700 805.400,93.200 788.500,88.400"/><rect x="780.600" y="97.300" width="28.600" height="3.200" rx="1.600"/><path d="M788 85.500l-5 4"/><polygon points="777.800,85 784.500,91.500 778.300,94.800"/></g><g fill="none" stroke="#c9c9c9" stroke-width="1.100"><rect x="823.500" y="70.300" width="28" height="12.700"/><rect x="823.500" y="87.800" width="28" height="13.300"/><path d="M823.500 85.400h28" stroke-dasharray="1.500 1.500"/></g><g fill="none" stroke="#c9c9c9" stroke-width="1.100"><rect x="875.300" y="70.300" width="23.600" height="22.200"/><rect x="865.200" y="78.800" width="22.800" height="22.300"/><rect x="875.300" y="78.800" width="12.700" height="13.700" fill="#dedede"/></g><g fill="none" stroke="#c9c9c9" stroke-width="1.100" stroke-linejoin="round"><rect x="913.500" y="91.600" width="29.500" height="8.900"/><rect x="920.500" y="83.600" width="15.900" height="8" stroke-dasharray="1.500 1.500"/><polygon points="924.800,71.700 939.500,78.200 936.400,83.600 922,77.100"/><path d="M921 78.200l-3.900 3.100"/><polygon points="910.900,82.100 917.100,83.600 913.200,88.300"/></g><g fill="none" stroke="#c9c9c9" stroke-width="1.100" stroke-linejoin="round"><polygon points="953.200,86.800 967.500,72.500 981.900,86.800 967.500,101.100"/><path d="M953.200 86.800h28.700"/><path d="M958 69.500l9 10.500" stroke-width="2.600"/><path d="M982.800 90.500c2 3.500 3.300 5.300 3.300 7.200a3.300 3.300 0 0 1-6.600 0c0-1.900 1.300-3.700 3.300-7.200z"/></g><text x="998.600" y="101.200" font-size="43" font-weight="bold" fill="#f7f7f7" stroke="#363636" stroke-width="1.200" textLength="24.800" lengthAdjust="spacingAndGlyphs">T</text><text x="1017.300" y="101.300" font-size="21" font-weight="bold" fill="#f7f7f7" stroke="#363636" stroke-width=".9">a</text></svg></div>

</body></html>
